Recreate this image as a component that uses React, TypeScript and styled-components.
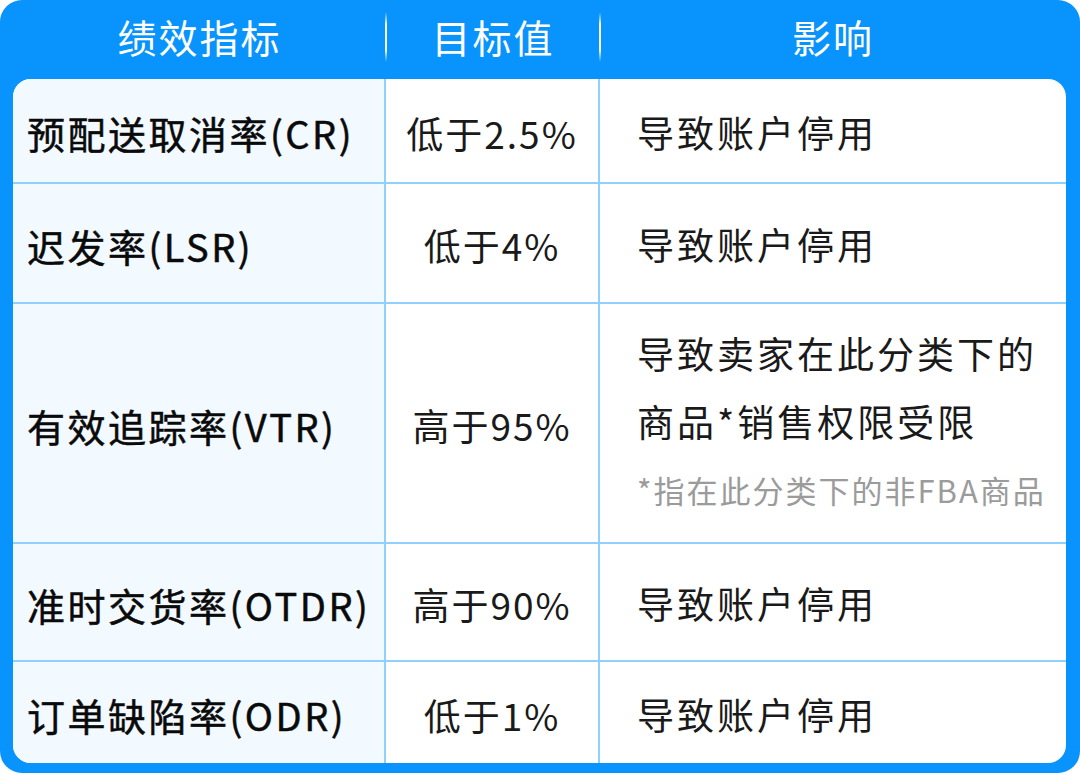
import React from "react";
import styled, { createGlobalStyle } from "styled-components";

const GlobalStyle = createGlobalStyle`
  html, body {
    margin: 0;
    padding: 0;
    background: #ffffff;
  }
  body {
    font-family: "Noto Sans CJK SC", "Noto Sans", sans-serif;
  }
`;

type Row = {
  metric: string;
  target: string;
  impact: string[];
  note?: string;
  height: number;
};

const rows: Row[] = [
  { metric: "预配送取消率(CR)", target: "低于2.5%", impact: ["导致账户停用"], height: 105 },
  { metric: "迟发率(LSR)", target: "低于4%", impact: ["导致账户停用"], height: 120 },
  {
    metric: "有效追踪率(VTR)",
    target: "高于95%",
    impact: ["导致卖家在此分类下的", "商品*销售权限受限"],
    note: "*指在此分类下的非FBA商品",
    height: 240,
  },
  { metric: "准时交货率(OTDR)", target: "高于90%", impact: ["导致账户停用"], height: 118 },
  { metric: "订单缺陷率(ODR)", target: "低于1%", impact: ["导致账户停用"], height: 101 },
];

const COLUMNS = "373px 214px 1fr";

const Frame = styled.div`
  width: 1080px;
  box-sizing: border-box;
  padding: 0 14px 10px 13px;
  background: #0893fd;
  border-radius: 22px;
`;

const HeaderRow = styled.div`
  display: grid;
  grid-template-columns: ${COLUMNS};
  height: 79px;
`;

const HeaderCell = styled.div<{ $divider?: boolean }>`
  position: relative;
  display: flex;
  align-items: center;
  justify-content: center;
  padding-bottom: 8px;
  color: #ffffff;
  font-size: 39px;
  letter-spacing: 2px;
  ${(p) =>
    p.$divider &&
    `
    &::after {
      content: "";
      position: absolute;
      right: -1px;
      top: 12px;
      height: 50px;
      width: 2px;
      background: linear-gradient(to bottom, rgba(255,255,255,0), #ffffff 25%, #ffffff 75%, rgba(255,255,255,0));
    }
  `}
`;

const Card = styled.div`
  background: #ffffff;
  border-radius: 18px;
  overflow: hidden;
`;

const TableRow = styled.div<{ $last?: boolean }>`
  display: grid;
  grid-template-columns: ${COLUMNS};
  box-sizing: border-box;
  border-bottom: ${(p) => (p.$last ? "none" : "2px solid #8fd0ff")};
`;

const MetricCell = styled.div`
  display: flex;
  align-items: center;
  padding: 4px 0 0 14px;
  background: #f2f9ff;
  border-right: 2px solid #8fd0ff;
  color: #0a0a0a;
  font-size: 38px;
  font-weight: 400;
  letter-spacing: 2.5px;
  -webkit-text-stroke: 0.5px #0a0a0a;
  white-space: nowrap;
`;

const TargetCell = styled.div`
  display: flex;
  align-items: center;
  justify-content: center;
  padding-top: 4px;
  border-right: 2px solid #8fd0ff;
  color: #1a1a1a;
  font-size: 37px;
  letter-spacing: 2px;
  white-space: nowrap;
`;

const ImpactCell = styled.div`
  display: flex;
  flex-direction: column;
  justify-content: center;
  padding: 2px 0 0 37px;
  color: #1a1a1a;
  font-size: 37px;
  letter-spacing: 3px;
  white-space: nowrap;
`;

const ImpactLine = styled.div`
  line-height: 68px;
`;

const Note = styled.div`
  margin-top: 11px;
  margin-bottom: 16px;
  line-height: 48px;
  color: #9b9b9b;
  font-size: 31px;
  letter-spacing: 2px;
`;

export default function App() {
  return (
    <>
      <GlobalStyle />
      <Frame>
        <HeaderRow>
          <HeaderCell $divider>绩效指标</HeaderCell>
          <HeaderCell $divider>目标值</HeaderCell>
          <HeaderCell>影响</HeaderCell>
        </HeaderRow>
        <Card>
          {rows.map((row, i) => (
            <TableRow key={row.metric} $last={i === rows.length - 1} style={{ height: row.height }}>
              <MetricCell>{row.metric}</MetricCell>
              <TargetCell>{row.target}</TargetCell>
              <ImpactCell>
                {row.impact.map((line) => (
                  <ImpactLine key={line}>{line}</ImpactLine>
                ))}
                {row.note && <Note>{row.note}</Note>}
              </ImpactCell>
            </TableRow>
          ))}
        </Card>
      </Frame>
    </>
  );
}
